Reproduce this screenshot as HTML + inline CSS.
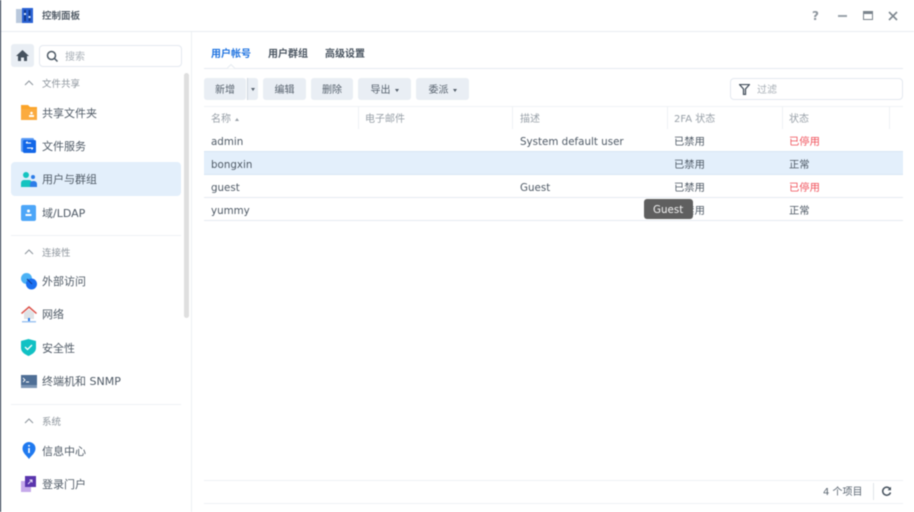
<!DOCTYPE html>
<html lang="zh"><head><meta charset="utf-8"><title>控制面板</title>
<style>
*{box-sizing:border-box}
html,body{margin:0;padding:0;width:914px;height:512px;overflow:hidden;background:#fff}
body{font-family:"DejaVu Sans","Noto Sans CJK SC",sans-serif;color:#4a5561;font-size:11px;position:relative;filter:blur(.45px)}
.a{position:absolute;white-space:nowrap;line-height:14px}
.b{position:absolute}
.item{position:absolute;left:42px;font-size:11px;line-height:14px;color:#4f5a66;white-space:nowrap}
.sec{position:absolute;left:42px;font-size:9.5px;line-height:12px;color:#8c949c;white-space:nowrap}
.btn{position:absolute;top:78px;height:22px;background:#e9eef4;border-radius:3px;font-size:10px;line-height:25px;text-align:center;color:#56616d;white-space:nowrap;overflow:hidden}
.th{position:absolute;top:113px;font-size:10px;line-height:13px;color:#98a0a8;white-space:nowrap}
.td{position:absolute;font-size:10.3px;line-height:14px;color:#4f5a66;white-space:nowrap;margin-top:.6px}
.hl{position:absolute;height:1px;background:#e6ebf1}
.vl{position:absolute;top:106px;width:1px;height:23px;background:#eef1f5}
.caret{display:inline-block;width:0;height:0;border-left:2.5px solid transparent;border-right:2.5px solid transparent;border-bottom:3px solid #56616d;transform:rotate(180deg);vertical-align:middle;margin-left:4px}
</style></head><body>
<div class="b" style="left:0;top:0;width:1px;height:512px;background:#16243a"></div>

<svg class="b" style="left:16px;top:8px" width="18" height="16" viewBox="0 0 18 16"><rect x="0" y="1" width="6" height="14" fill="#b9c8dc"/><rect x="6" y="0" width="11" height="15" fill="#2a62d4"/><path d="M9 2v11M13.500 2v11" stroke="#123a8c" stroke-width="2"/><rect x="8" y="5" width="2" height="2" fill="#cfe0f8"/><rect x="12.500" y="8" width="2" height="2" fill="#cfe0f8"/></svg>
<div class="a" style="left:42px;top:10px;font-size:9.5px;color:#515b66;font-weight:bold">控制面板</div>
<div class="a" style="left:812px;top:9px;font-size:12px;color:#8d959d;font-weight:bold">?</div>
<div class="b" style="left:838px;top:15px;width:9px;height:1.5px;background:#9aa2aa"></div>
<svg class="b" style="left:863px;top:11px" width="10" height="9"><rect x=".5" y=".5" width="9" height="8" fill="none" stroke="#7b848d"/><rect x="0" y="0" width="10" height="3" fill="#7b848d"/></svg>
<svg class="b" style="left:888px;top:11px" width="10" height="10"><path d="M1 1l8 8M9 1l-8 8" stroke="#7f8890" stroke-width="1.6"/></svg>
<div class="hl" style="left:1px;top:31px;width:913px;background:#e9edf1"></div>
<div class="b" style="left:191px;top:32px;width:1px;height:480px;background:#edf0f3"></div>

<div class="b" style="left:11px;top:44px;width:23px;height:23px;background:#e9eef4;border-radius:3px"></div>
<svg class="b" style="left:16px;top:50px" width="13" height="11" viewBox="0 0 13 11"><path d="M6.500 0L0 6h2v5h3V7.500h3V11h3V6h2z" fill="#46525e"/></svg>
<div class="b" style="left:39px;top:45px;width:143px;height:22px;border:1px solid #e4e9f0;border-radius:4px"></div>
<svg class="b" style="left:46px;top:50px" width="13" height="13"><circle cx="5.500" cy="5.500" r="4" fill="none" stroke="#4e5a66" stroke-width="1.500"/><path d="M8.500 8.500l3 3" stroke="#4e5a66" stroke-width="1.500"/></svg>
<div class="a" style="left:65px;top:51px;font-size:10px;color:#a9b0b7">搜索</div>
<div class="b" style="left:184px;top:73px;width:5px;height:245px;background:#dfdfdf;border-radius:3px"></div>

<svg class="b" style="left:24px;top:80px" width="10" height="6"><path d="M1 5l4-4 4 4" fill="none" stroke="#8c949c"/></svg>
<div class="sec" style="top:79px">文件共享</div>
<svg class="b" style="left:21px;top:105px" width="16" height="15"><path d="M0 0h7l2 2h7v13H0z" fill="#fba429"/><rect x="0" y="4" width="16" height="11" fill="#fbab3f"/><circle cx="10.500" cy="8" r="1.300" fill="#fff"/><rect x="8" y="10" width="5" height="2" fill="#fff"/></svg>
<div class="item" style="top:107px">共享文件夹</div>
<svg class="b" style="left:21px;top:137px" width="16" height="17"><rect x="0" y="1" width="13" height="14" rx="1.500" fill="#5c9cf5"/><rect x="2" y="3" width="13" height="13" rx="1.500" fill="#1367e8"/><path d="M5 6h5M5 6l1.500-1.500M12 11H6M12 11l-1.500 1.500" stroke="#fff" stroke-width="1" fill="none"/></svg>
<div class="item" style="top:140px">文件服务</div>

<div class="b" style="left:11px;top:162px;width:170px;height:34px;background:#e3effb;border-radius:4px"></div>
<svg class="b" style="left:21px;top:172px" width="16" height="15"><circle cx="5" cy="3" r="3" fill="#14c4c0"/><path d="M0 15v-4a3 3 0 013-3h5a3 3 0 013 3v4z" fill="#14c4c0"/><circle cx="12" cy="5" r="2" fill="#2c7de8"/><path d="M9 15v-3a3 3 0 013-3h1a3 3 0 013 3v3z" fill="#2c7de8"/></svg>
<div class="item" style="top:173px">用户与群组</div>
<svg class="b" style="left:21px;top:205px" width="15" height="16"><rect width="15" height="16" rx="2" fill="#4da6f8"/><circle cx="7.500" cy="6" r="1.500" fill="#fff"/><rect x="4.500" y="9" width="6" height="2" fill="#fff"/></svg>
<div class="item" style="top:207px">域/LDAP</div>

<div class="hl" style="left:11px;top:235px;width:170px;background:#eef1f5"></div>
<svg class="b" style="left:24px;top:249px" width="10" height="6"><path d="M1 5l4-4 4 4" fill="none" stroke="#8c949c"/></svg>
<div class="sec" style="top:248px">连接性</div>
<svg class="b" style="left:21px;top:273px" width="16" height="17"><circle cx="5.500" cy="5.500" r="5.500" fill="#4cb2f5"/><circle cx="10.500" cy="11" r="5.500" fill="#1a6ff0"/><path d="M6 6l5 5" stroke="#123f9c" stroke-width="1.200"/></svg>
<div class="item" style="top:275px">外部访问</div>
<svg class="b" style="left:21px;top:306px" width="16" height="17"><path d="M8 0L0 7l1 1 7-6 7 6 1-1z" fill="#dc5048"/><path d="M3 7l5-4 5 4v6H3z" fill="#dfe3e6"/><rect x="7" y="12" width="2" height="3" fill="#2c7de8"/><rect x="1" y="15" width="14" height="1.500" fill="#9fc5f2"/></svg>
<div class="item" style="top:308px">网络</div>
<svg class="b" style="left:21px;top:339px" width="15" height="17"><path d="M7.500 0L15 2v7c0 4-4 6.500-7.500 8C4 15.500 0 13 0 9V2z" fill="#11c1c4"/><path d="M4 8l2.500 2.500L11 6" fill="none" stroke="#fff" stroke-width="1.300"/></svg>
<div class="item" style="top:342px">安全性</div>
<svg class="b" style="left:21px;top:375px" width="16" height="13"><rect width="16" height="13" fill="#4f6f96"/><rect y="10" width="16" height="3" fill="#7d96b5"/><path d="M2 3l2 2-2 2M5 7h3" stroke="#fff" stroke-width=".9" fill="none"/></svg>
<div class="item" style="top:375px">终端机和 SNMP</div>

<div class="hl" style="left:11px;top:404px;width:170px;background:#eef1f5"></div>
<svg class="b" style="left:24px;top:418px" width="10" height="6"><path d="M1 5l4-4 4 4" fill="none" stroke="#8c949c"/></svg>
<div class="sec" style="top:417px">系统</div>
<svg class="b" style="left:22px;top:442px" width="14" height="17"><path d="M7 0a6.500 6.500 0 016.500 6.500C13.500 11 9 14 7 17 5 14 .5 11 .5 6.500A6.500 6.500 0 017 0z" fill="#1f79ef"/><rect x="6.200" y="6" width="1.600" height="5" fill="#fff"/><rect x="6.200" y="3" width="1.600" height="1.600" fill="#fff"/></svg>
<div class="item" style="top:445px">信息中心</div>
<svg class="b" style="left:21px;top:476px" width="16" height="16"><rect x="0" y="5" width="10" height="11" fill="#c5a9ea"/><rect x="4" y="0" width="11" height="11" fill="#5a35ad"/><path d="M7 8l4-4M8.500 4H11v2.500" stroke="#e5dcf7" fill="none"/></svg>
<div class="item" style="top:478px">登录门户</div>

<div class="a" style="left:211px;top:48px;font-size:10px;color:#1f73e0;font-weight:bold">用户帐号</div>
<div class="a" style="left:268px;top:48px;font-size:10px;color:#4a5561;font-weight:bold">用户群组</div>
<div class="a" style="left:325px;top:48px;font-size:10px;color:#4a5561;font-weight:bold">高级设置</div>
<div class="hl" style="left:204px;top:68px;width:699px"></div>
<svg class="b" style="left:225px;top:64px" width="12" height="5"><path d="M0 4.500h2L6 .5l4 4h2" fill="#fff" stroke="#e6ebf1"/></svg>

<div class="btn" style="left:204px;width:42px">新增</div>
<div class="btn" style="left:247px;width:11px;border-left:1px solid #cfd6de;border-radius:0 3px 3px 0"><i class="caret" style="margin:0;position:absolute;left:3px;top:10px"></i></div>
<div class="btn" style="left:263px;width:43px">编辑</div>
<div class="btn" style="left:311px;width:42px">删除</div>
<div class="btn" style="left:358px;width:53px">导出<i class="caret"></i></div>
<div class="btn" style="left:416px;width:53px">委派<i class="caret"></i></div>

<div class="b" style="left:730px;top:78px;width:173px;height:22px;border:1px solid #e4e9f0;border-radius:4px"></div>
<svg class="b" style="left:739px;top:84px" width="11" height="11"><path d="M.5 .5h10L6.500 5v5.500h-2V5z" fill="none" stroke="#46525e" stroke-width="1.300"/></svg>
<div class="a" style="left:757px;top:84px;font-size:10px;color:#a9b0b7">过滤</div>

<div class="hl" style="left:204px;top:106px;width:699px;background:#f0f3f6"></div>
<div class="vl" style="left:358px"></div><div class="vl" style="left:512px"></div><div class="vl" style="left:667px"></div><div class="vl" style="left:782px"></div><div class="vl" style="left:889px"></div>
<div class="th" style="left:211px">名称 <i class="caret" style="transform:none;margin-left:1px;border-bottom-color:#98a0a8"></i></div>
<div class="th" style="left:365px">电子邮件</div>
<div class="th" style="left:520px">描述</div>
<div class="th" style="left:674px">2FA 状态</div>
<div class="th" style="left:789px">状态</div>

<div class="b" style="left:204px;top:151px;width:699px;height:24px;background:#e3effb"></div>
<div class="hl" style="left:204px;top:151px;width:699px;background:#d9e6f3"></div>
<div class="hl" style="left:204px;top:174px;width:699px;background:#d9e6f3"></div>
<div class="hl" style="left:204px;top:197px;width:699px"></div>
<div class="hl" style="left:204px;top:220px;width:699px"></div>

<div class="td" style="left:211px;top:134px">admin</div>
<div class="td" style="left:520px;top:134px">System default user</div>
<div class="td" style="left:674px;top:134px">已禁用</div>
<div class="td" style="left:789px;top:134px;color:#f0505a">已停用</div>
<div class="td" style="left:211px;top:157px">bongxin</div>
<div class="td" style="left:674px;top:157px">已禁用</div>
<div class="td" style="left:789px;top:157px">正常</div>
<div class="td" style="left:211px;top:180px">guest</div>
<div class="td" style="left:520px;top:180px">Guest</div>
<div class="td" style="left:674px;top:180px">已禁用</div>
<div class="td" style="left:789px;top:180px;color:#f0505a">已停用</div>
<div class="td" style="left:211px;top:203px">yummy</div>
<div class="td" style="left:674px;top:203px">已禁用</div>
<div class="td" style="left:789px;top:203px">正常</div>

<div class="b" style="left:644px;top:199px;width:49px;height:20px;background:#5f5f5f;border-radius:3px;color:#f2f2f2;font-size:10.3px;line-height:23px;padding-left:9px;overflow:hidden">Guest</div>

<div class="hl" style="left:204px;top:480px;width:699px;background:#eef1f5"></div>
<div class="hl" style="left:204px;top:503px;width:699px;background:#eef1f5"></div>
<div class="a" style="left:823px;top:486px;font-size:10px;color:#5b6672">4 个项目</div>
<div class="b" style="left:873px;top:483px;width:1px;height:17px;background:#e0e4e9"></div>
<svg class="b" style="left:881px;top:486px" width="11" height="11" viewBox="0 0 11 11"><path d="M9.200 3.200A4 4 0 1 0 9.500 6.500" fill="none" stroke="#46525e" stroke-width="1.500"/><path d="M10 .8v3.400H6.600z" fill="#46525e"/></svg>
</body></html>
